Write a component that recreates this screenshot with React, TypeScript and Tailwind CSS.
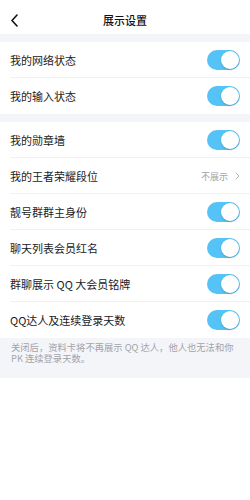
import React from "react";

const font = { fontFamily: '"Noto Sans CJK SC", "Noto Sans", sans-serif' };

function Toggle() {
  return (
    <div className="relative h-[20px] w-[33px] rounded-full bg-[#55c3f6]">
      <div className="absolute right-[1px] top-[1px] h-[18px] w-[18px] rounded-full bg-white shadow-[0_1px_2px_rgba(0,0,0,0.2)]" />
    </div>
  );
}

function Row({ label, last, right }: { label: string; last?: boolean; right?: React.ReactNode }) {
  return (
    <div className="relative flex h-[36px] items-center justify-between pl-[10px] pr-[10px]">
      <span className="text-[11px] leading-none text-[#1c1c1e]">{label}</span>
      {right ?? <Toggle />}
      {!last && <div className="absolute bottom-0 left-[10px] right-0 h-px bg-[#f1f1f3]" />}
    </div>
  );
}

export default function App() {
  return (
    <div className="h-[500px] w-[250px] bg-white" style={font}>
      <div className="flex h-[34px] items-center justify-center pt-[7px] relative">
        <svg className="absolute left-[10px] top-[14px]" width="9" height="13" viewBox="0 0 9 13">
          <path d="M7 1 L2 6.5 L7 12" fill="none" stroke="#111" strokeWidth="1.6" strokeLinecap="round" strokeLinejoin="round" />
        </svg>
        <span className="text-[11px] font-medium leading-none text-[#111]">展示设置</span>
      </div>
      <div className="h-[8px] bg-[#f4f5f9]" />
      <div>
        <Row label="我的网络状态" />
        <Row label="我的输入状态" last />
      </div>
      <div className="h-[8px] bg-[#f4f5f9]" />
      <div>
        <Row label="我的勋章墙" />
        <Row
          label="我的王者荣耀段位"
          right={
            <div className="flex items-center gap-[7px]">
              <span className="text-[9px] leading-none text-[#a3a3a8]">不展示</span>
              <svg width="5" height="8" viewBox="0 0 5 8">
                <path d="M1 1 L4 4 L1 7" fill="none" stroke="#b5b5ba" strokeWidth="1" strokeLinecap="round" strokeLinejoin="round" />
              </svg>
            </div>
          }
        />
        <Row label="靓号群群主身份" />
        <Row label="聊天列表会员红名" />
        <Row label="群聊展示 QQ 大会员铭牌" />
        <Row label="QQ达人及连续登录天数" last />
      </div>
      <div className="bg-[#f4f5f9] px-[11px] pt-[4px] pb-[14px]">
        <p className="text-[9.3px] leading-[11px] text-[#a3a3a8]">
          关闭后，资料卡将不再展示 QQ 达人，他人也无法和你PK 连续登录天数。
        </p>
      </div>
    </div>
  );
}
